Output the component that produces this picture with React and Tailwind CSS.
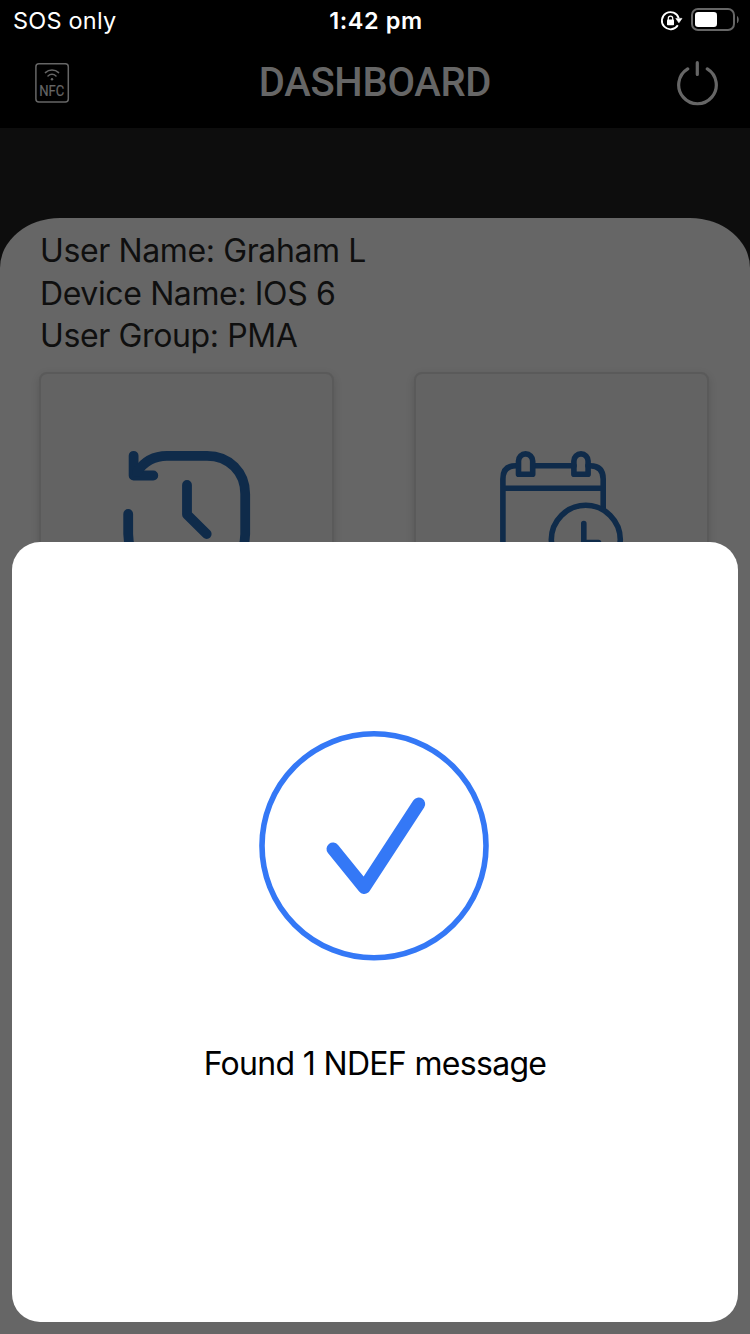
function NfcIcon() {
  return (
    <svg width="36" height="42" viewBox="34 62 36 42" fill="none" stroke="#666" strokeLinecap="round">
      <rect x="35.9" y="63.7" width="32.4" height="38.4" rx="3" strokeWidth="1.5" />
      <path d="M45.400 72.600a9.500 9.500 0 0 1 13.200 0M48 76a5.700 5.700 0 0 1 8 0" strokeWidth="1.5" />
      <circle cx="52" cy="79.200" r="1.200" fill="#666" stroke="none" />
      <text x="39.300" y="96.400" fill="#666" stroke="#666" strokeWidth="0.2" fontFamily="Roboto, sans-serif" fontSize="13.800" textLength="25" lengthAdjust="spacingAndGlyphs">NFC</text>
    </svg>
  );
}

function PowerIcon() {
  return (
    <svg width="44" height="46" viewBox="675 60 44 46" fill="none" stroke="#666" strokeWidth="3.2" strokeLinecap="round">
      <path d="M687.7 68.9A18.8 18.8 0 1 0 707.3 68.9M697.3 62.7V74.5" />
    </svg>
  );
}

function StatusIcons() {
  return (
    <svg width="82" height="26" viewBox="659 7 82 26" fill="none">
      <path d="M677.8 25.2A8.6 8.6 0 1 1 678.7 18.2" stroke="#fff" strokeWidth="1.8" />
      <path d="M675.8 18.4h6.2l-3.1 4.4z" fill="#fff" stroke="#fff" strokeWidth="0.6" strokeLinejoin="round" />
      <rect x="667" y="19.4" width="7" height="5.8" rx="0.8" fill="#fff" />
      <path d="M668.3 20v-1.7a2.2 2.2 0 0 1 4.4 0V20" stroke="#fff" strokeWidth="1.2" />
      <rect x="692" y="9" width="42" height="21" rx="6" stroke="#666" strokeWidth="2" />
      <rect x="695" y="12" width="22" height="15" rx="3.2" fill="#fff" />
      <path d="M737 16c2.3 1 2.3 6.200 0 7.200z" fill="#666" />
    </svg>
  );
}

function HistoryIcon() {
  return (
    <svg width="128" height="128" viewBox="123 450 128 128" fill="none" stroke="#0f2b4a" strokeWidth="9.8" strokeLinecap="round" strokeLinejoin="round">
      <path d="M133.600 455.800V475.500H153.300" />
      <path d="M137 472C144 461.500 154 455.800 167 455.800H207C229 455.800 245.200 472 245.200 494V534C245.200 556 229 572 207 572H167C143 572 128.200 556 128.200 534V514" />
      <path d="M187 485V514.500L206.700 534" />
    </svg>
  );
}

function CalendarIcon() {
  return (
    <svg width="126" height="128" viewBox="499 450 126 128" fill="none" stroke="#0f2b4a" strokeWidth="5.6" strokeLinecap="round" strokeLinejoin="round">
      <path d="M518 465.700H516Q502.900 465.700 502.900 479V571H560M533 465.700H574M588 465.700H590Q603.200 465.700 603.200 479V509M503 488.300H603" />
      <path d="M518.500 474.200V461a7.100 7.100 0 0 1 14.200 0V474.200ZM573.900 474.200V461a7.100 7.100 0 0 1 14.200 0V474.200Z" />
      <circle cx="585.800" cy="539.800" r="34.500" />
      <path d="M583.800 523.500V542.500H598.500" />
    </svg>
  );
}

function Card({ children }) {
  return (
    <div className="flex h-[294px] w-[295px] justify-center rounded-[8px] border-2 border-[#5a5a5a] bg-[#636363] pt-[76px] shadow-[0_3px_8px_rgba(0,0,0,0.14)]">
      {children}
    </div>
  );
}

export default function App() {
  return (
    <div className="relative flex h-[1334px] w-[750px] flex-col overflow-hidden bg-[#0d0d0d] font-['Inter',sans-serif]">
      <header className="h-32 shrink-0 bg-black">
        <div className="grid h-[42px] grid-cols-3 items-center pl-[11px] pr-[9px] text-white">
          <span className="pl-[2px] text-[23.5px] leading-[42px] tracking-[0.2px]">SOS only</span>
          <span className="text-center text-[23.5px] font-semibold leading-[42px] tracking-[0.6px]">1:42 pm</span>
          <span className="flex justify-end pb-[2px]"><StatusIcons /></span>
        </div>
        <div className="flex h-[82px] items-center justify-between pl-[34px] pr-[31px]">
          <NfcIcon />
          <h1 className="pl-[5px] font-['Roboto',sans-serif] text-[40px] font-medium leading-[80px] tracking-[-0.3px] text-[#666]">DASHBOARD</h1>
          <PowerIcon />
        </div>
      </header>

      <main className="mt-[90px] flex-1 rounded-t-[60px_50px] bg-[#666] px-10 pt-3">
        <div className="flex flex-col items-start whitespace-nowrap text-[32px] leading-[42.5px] tracking-[-0.38px] text-[#0f0f0f]">
          <p>User Name: Graham L</p>
          <p>Device Name: IOS 6</p>
          <p>User Group: PMA</p>
        </div>
        <div className="-ml-px mr-px mt-[14px] flex justify-between">
          <Card><HistoryIcon /></Card>
          <Card><CalendarIcon /></Card>
        </div>
      </main>

      <section className="absolute inset-x-3 bottom-3 top-[542px] flex flex-col items-center rounded-[28px] bg-white pt-[188px]">
        <svg width="232" height="232" viewBox="259 730 232 232" fill="none" stroke="#3478f6">
          <circle cx="374" cy="845.700" r="112" strokeWidth="5.600" />
          <path d="M333 849L364.200 887.500L418.700 804" strokeWidth="13" strokeLinecap="round" strokeLinejoin="round" />
        </svg>
        <p className="mt-[81px] whitespace-nowrap text-[32px] leading-[42px] tracking-[-0.68px] text-black">Found 1 NDEF message</p>
      </section>
    </div>
  );
}
